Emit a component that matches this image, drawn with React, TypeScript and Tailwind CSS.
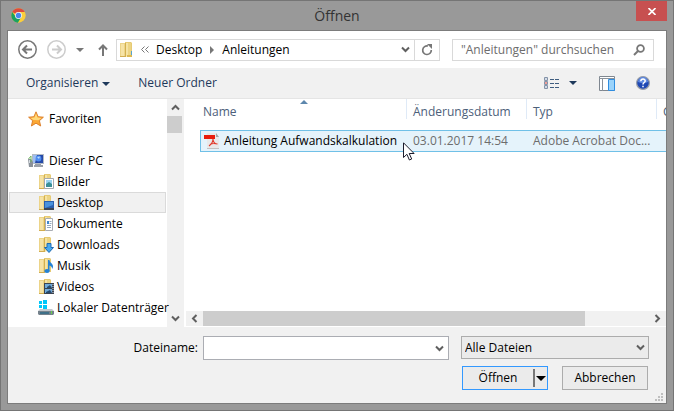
import { useState, type ReactNode } from "react";

type IconKind = "pictures" | "desktop" | "documents" | "downloads" | "music" | "videos" | "plain";

type Place = { name: string; icon: ReactNode; child?: boolean };

function FolderIcon({ kind }: { kind: IconKind }) {
  return (
    <svg width="16" height="16" viewBox="0 0 16 16" className="shrink-0" aria-hidden="true">
      <path d="M1 1h5l1 1v13H1z" fill="#ecd489" />
      <path d="M2 2h3v12H2z" fill="#f6e3a6" />
      <path d="M6 0h6l1 1v13H6z" fill="#e6ca74" />
      <path d="M6 1h1v14H6z" fill="#d3b04f" />
      <path d="M7 1h2v13l-2 1z" fill="#f5e3a4" />
      <path d="M9 1h3v12H9z" fill="#ecd484" />
      <path d="M1 14h6v1H1z" fill="#d2ad50" />
      {kind === "plain" && (
        <>
          <path d="M8 13h5v2H8z" fill="#dcb953" />
          <path d="M12 9h1v4h-1z" fill="#57a3cf" />
        </>
      )}
      {kind === "pictures" && (
        <>
          <path d="M6.500 4.500h9v10h-9z" fill="#fff" stroke="#a3a9b0" />
          <path d="M8 6h6v7H8z" fill="#9ad4f2" />
          <path d="M8 10l3-2 3 2v3H8z" fill="#3a8f98" />
        </>
      )}
      {kind === "desktop" && (
        <>
          <path d="M6 6h10v8H6z" fill="#2a5fae" />
          <path d="M7 7h8v3l-8 3z" fill="#4a92dc" />
          <path d="M6 13h10v2H6z" fill="#3c4656" />
        </>
      )}
      {kind === "documents" && (
        <>
          <path d="M7.500 2.500h7v12h-7z" fill="#fff" stroke="#a9adb3" />
          <path d="M9 5h2v3H9z" fill="#3d86cf" />
          <path d="M11.500 5.500h2M11.500 7.500h2M9 9.500h4M9 11.500h4" stroke="#93a8bf" />
        </>
      )}
      {kind === "downloads" && (
        <path d="M9 6.500h4v4h2.500L11 15.500 6.500 10.500H9z" fill="#49aaf0" stroke="#1f6bb5" />
      )}
      {kind === "music" && (
        <>
          <path d="M10 2h1.500c0 3 3.500 3 3.500 6.500 0 1-.5 2-1 2.500.2-2-1-3-2.500-3.500V13H10z" fill="#2582d5" />
          <ellipse cx="9" cy="13" rx="2.700" ry="2" fill="#2582d5" />
        </>
      )}
      {kind === "videos" && (
        <>
          <path d="M6 4h10v11H6z" fill="#3b4350" />
          <path d="M7 5h7v4H7zM7 10h7v4H7z" fill="#6ea9d8" />
          <path d="M9 8l3-2 2 3H9zM8 13l4-2 2 3H8z" fill="#26496e" />
          <path d="M15 5v10" stroke="#dfe3e8" strokeDasharray="1 1" />
        </>
      )}
    </svg>
  );
}

function StarIcon() {
  return (
    <svg width="16" height="16" viewBox="0 0 16 16" className="shrink-0" aria-hidden="true">
      <path
        d="M8 .8l2.100 4.900 5.300.5-4 3.500 1.300 5.300L8 12.200l-4.600 2.800 1.200-5.300-4-3.500 5.300-.5z"
        fill="#fba834"
        stroke="#d97a26"
        strokeWidth=".9"
      />
      <path d="M8 2.500l1.500 4 4 .4-3 2.300-5-.2L2.600 7l3.900-.5z" fill="#ffd97a" />
    </svg>
  );
}

function ComputerIcon() {
  return (
    <svg width="16" height="16" viewBox="0 0 16 16" className="shrink-0" aria-hidden="true">
      <path d="M4 1h12v10H4z" fill="#b3bbc5" />
      <path d="M5 2h10v8H5z" fill="#2549a8" />
      <path d="M5 2h4L7 10H5z" fill="#9dbdf0" />
      <circle cx="10.500" cy="5.500" r="2.900" fill="#4e8df0" />
      <path d="M9 4l3-.5-1 2.500z" fill="#b8dcff" />
      <path d="M7 11h6v1h2v2H6v-2h1z" fill="#9aa0a8" />
      <path d="M0 6h3l2 3v5H1z" fill="#8a9199" />
      <path d="M1 7h1v3H1z" fill="#d4dae0" />
      <path d="M.5 6l2.500-3v6" fill="none" stroke="#6fb65f" />
    </svg>
  );
}

function DriveIcon() {
  return (
    <svg width="16" height="16" viewBox="0 0 16 16" className="shrink-0" aria-hidden="true">
      <path d="M1 1h3v3H1zM5 0h4v4H5zM1 5h3v3H1zM5 5h4v4H5z" fill="#00c8fa" />
      <path d="M2 9h12l2 2H0z" fill="#c3c9ce" />
      <path d="M0 11h16v3l-1 1H1l-1-1z" fill="#75828c" />
      <path d="M2 12h9v2H2z" fill="#3f7088" />
      <path d="M13 11h1v3h-1z" fill="#66d14a" />
    </svg>
  );
}

function ChromeIcon() {
  return (
    <svg width="15" height="15" viewBox="0 0 48 48" aria-hidden="true">
      <circle cx="24" cy="24" r="23" fill="#fbce3c" />
      <path d="M24 24L4 12.500A23 23 0 0 1 44 13H24z" fill="#dd4b3e" />
      <path d="M4 12.500A23 23 0 0 0 22 47l11-18-9-5-9 4z" fill="#1aa260" />
      <circle cx="24" cy="24" r="11" fill="#f4f4f4" />
      <circle cx="24" cy="24" r="8.500" fill="#4a88ee" />
    </svg>
  );
}

function PdfIcon() {
  return (
    <svg width="16" height="16" viewBox="0 0 16 16" className="shrink-0" aria-hidden="true">
      <path d="M3 0h9l3 4v12H3z" fill="#e9e9e9" />
      <path d="M12 0l3 4h-3z" fill="#a5a5a5" />
      <path d="M3 15h12v1H3z" fill="#c2c2c2" />
      <path d="M0 2h11v4H0z" fill="#e81d0c" />
      <path
        d="M9 6c0 3-1.500 5-4 7M9 6.500c.4 2.500 2 4.500 4.500 4.500M6 11.500c2-1.200 4-1.500 7.500-.5"
        fill="none"
        stroke="#e0392b"
        strokeWidth="1.100"
      />
    </svg>
  );
}

function Chevron({ dir }: { dir: "up" | "down" | "left" | "right" }) {
  const paths = {
    up: "M1 6.500L4.500 3 8 6.500",
    down: "M1 2.500L4.500 6 8 2.500",
    left: "M6.500 1L3 4.500 6.500 8",
    right: "M2.500 1L6 4.500 2.500 8",
  };
  return (
    <svg width="9" height="9" viewBox="0 0 9 9" aria-hidden="true">
      <path d={paths[dir]} fill="none" stroke="#5f5f5f" strokeWidth="2" />
    </svg>
  );
}

function Triangle({ className }: { className?: string }) {
  return (
    <svg width="8" height="4" viewBox="0 0 8 4" className={className} aria-hidden="true">
      <path d="M0 0h8L4 4z" fill="currentColor" />
    </svg>
  );
}

const places: Place[] = [
  { name: "Dieser PC", icon: <ComputerIcon /> },
  { name: "Bilder", icon: <FolderIcon kind="pictures" />, child: true },
  { name: "Desktop", icon: <FolderIcon kind="desktop" />, child: true },
  { name: "Dokumente", icon: <FolderIcon kind="documents" />, child: true },
  { name: "Downloads", icon: <FolderIcon kind="downloads" />, child: true },
  { name: "Musik", icon: <FolderIcon kind="music" />, child: true },
  { name: "Videos", icon: <FolderIcon kind="videos" />, child: true },
  { name: "Lokaler Datenträger", icon: <DriveIcon />, child: true },
];

function NavBar() {
  return (
    <div className="flex h-[37px] items-center bg-white pr-3 pl-[10px]">
      <button type="button" aria-label="Zurück">
        <svg width="19" height="19" viewBox="0 0 19 19" fill="none" stroke="#777">
          <circle cx="9.500" cy="9.500" r="8.700" strokeWidth="1.500" />
          <path d="M14 9.500H6M9 5.500l-4 4 4 4" strokeWidth="2" />
        </svg>
      </button>
      <button type="button" aria-label="Vorwärts" className="ml-[10px]">
        <svg width="19" height="19" viewBox="0 0 19 19" fill="none" stroke="#ccc">
          <circle cx="9.500" cy="9.500" r="8.700" strokeWidth="1.500" />
          <path d="M5 9.500h8M10 5.500l4 4-4 4" strokeWidth="2" />
        </svg>
      </button>
      <button type="button" aria-label="Verlauf" className="ml-[10px]">
        <Triangle className="text-[#777]" />
      </button>
      <button type="button" aria-label="Nach oben" className="ml-[14px]">
        <svg width="10" height="12" viewBox="0 0 10 12" fill="none" stroke="#777" strokeWidth="2">
          <path d="M5 12V2M1 5.500l4-4 4 4" />
        </svg>
      </button>
      <div className="ml-2 flex h-[22px] min-w-0 flex-1 items-center border border-[#d9d9d9]">
        <span className="pl-[2px]">
          <FolderIcon kind="plain" />
        </span>
        <svg width="8" height="7" viewBox="0 0 8 7" className="ml-[6px]" fill="none" stroke="#777" aria-hidden="true">
          <path d="M3.500.5l-3 3 3 3M7.500.5l-3 3 3 3" />
        </svg>
        <button type="button" className="ml-[7px]">Desktop</button>
        <svg width="4" height="8" viewBox="0 0 4 8" className="ml-2" aria-hidden="true">
          <path d="M0 0l4 4-4 4z" fill="#777" />
        </svg>
        <button type="button" className="ml-2">Anleitungen</button>
        <button type="button" aria-label="Vorherige Orte" className="mr-1 ml-auto">
          <Chevron dir="down" />
        </button>
        <button
          type="button"
          aria-label="Aktualisieren"
          className="flex h-full w-[25px] items-center justify-center border-l border-[#d9d9d9]"
        >
          <svg width="12" height="12" viewBox="0 0 12 12" aria-hidden="true">
            <path d="M7 2A4.300 4.300 0 1 0 10.300 6" fill="none" stroke="#777" strokeWidth="1.700" />
            <path d="M6 0h5v5z" fill="#777" />
          </svg>
        </button>
      </div>
      <label className="ml-3 flex h-[22px] w-[202px] items-center border border-[#d9d9d9] pr-2 pl-2">
        <input
          type="search"
          aria-label="Anleitungen durchsuchen"
          placeholder={'"Anleitungen" durchsuchen'}
          className="min-w-0 flex-1 outline-none placeholder:text-[#6d6d6d]"
        />
        <svg width="12" height="12" viewBox="0 0 12 12" fill="none" stroke="#777" aria-hidden="true">
          <circle cx="7.500" cy="4.500" r="3.400" strokeWidth="1.800" />
          <path d="M5 7L1 11" strokeWidth="2" />
        </svg>
      </label>
    </div>
  );
}

function Toolbar() {
  return (
    <div className="flex h-[31px] items-center border-b border-[#e5e5e5] bg-[#f1f1f1] pr-4 pl-[18px] text-[#1e395b]">
      <button type="button" className="flex items-center gap-1">
        Organisieren
        <Triangle className="mt-px" />
      </button>
      <button type="button" className="ml-7">Neuer Ordner</button>
      <button type="button" aria-label="Ansicht" className="ml-auto">
        <svg width="15" height="13" viewBox="0 0 15 13" fill="none" aria-hidden="true">
          <path d="M.5.500h3v3h-3zM.5 4.500h3v3h-3zM.5 8.500h3v3h-3z" fill="#fff" stroke="#8493a8" />
          <path d="M2 1.500v1M2 9.500v1" stroke="#4a6e9a" />
          <path d="M2 5v2" stroke="#e03c31" />
          <path d="M6 2.500h4M11 2.500h4M6 6.500h4M11 6.500h4M6 10.500h4M11 10.500h4" stroke="#3f5d80" />
        </svg>
      </button>
      <button type="button" aria-label="Weitere Ansichten" className="ml-[10px]">
        <Triangle />
      </button>
      <button type="button" aria-label="Vorschaufenster" className="ml-[22px]">
        <svg width="16" height="15" viewBox="0 0 16 15" aria-hidden="true">
          <path d="M.5.500h15v14H.500z" fill="#fff" stroke="#7f8790" />
          <path d="M0 2.500h16M3.500 3v12" stroke="#8a929b" />
          <path d="M9.500 3.500h6v11h-6z" fill="#9ad3fb" stroke="#2f8de0" />
        </svg>
      </button>
      <button type="button" aria-label="Hilfe" className="ml-[21px]">
        <svg width="14" height="14" viewBox="0 0 14 14" aria-hidden="true">
          <circle cx="7" cy="7" r="6.400" fill="#1f49b4" stroke="#9a9fa8" strokeWidth="1.200" />
          <path d="M2 6a5 5 0 0 1 10 0c-3 1.500-7 1.500-10 0z" fill="#5f8ae0" />
          <path
            d="M4.800 5.300C4.900 2.300 9.300 2.500 9.200 5 9.100 6.500 7 6.700 7 8.500M7 9.700v1.600"
            fill="none"
            stroke="#fff"
            strokeWidth="1.500"
          />
        </svg>
      </button>
    </div>
  );
}

function Sidebar({ selected, onSelect }: { selected: string; onSelect: (name: string) => void }) {
  return (
    <div className="flex w-[176px] shrink-0 bg-white">
      <nav className="relative z-10 min-w-0 flex-1 pt-[9px] pr-px pb-2 pl-px">
        <button type="button" className="flex h-[21px] w-full items-center gap-[5px] pl-[19px] whitespace-nowrap">
          <StarIcon />
          Favoriten
        </button>
        <ul className="mt-[21px]">
          {places.map(place => (
            <li key={place.name}>
              <button
                type="button"
                onClick={() => onSelect(place.name)}
                className={`flex h-[21px] w-full items-center border whitespace-nowrap ${
                  place.child ? "gap-[3px] pl-7" : "gap-[5px] pl-[18px]"
                } ${selected === place.name ? "border-[#dadada] bg-[#f1f1f1]" : "border-transparent"}`}
              >
                {place.icon}
                {place.name}
              </button>
            </li>
          ))}
        </ul>
      </nav>
      <div className="flex w-4 shrink-0 flex-col items-center bg-[#f1f1f1]">
        <div className="flex h-[17px] items-center">
          <Chevron dir="up" />
        </div>
        <div className="h-[17px] w-full border-r border-[#f1f1f1] bg-[#cdcdcd]" />
        <div className="mt-auto flex h-[17px] items-center">
          <Chevron dir="down" />
        </div>
      </div>
      <div className="w-px shrink-0 border-r border-[#f1f1f1]" />
    </div>
  );
}

function FileList() {
  const headers = ["Name", "Änderungsdatum", "Typ", "Größe"];
  return (
    <div className="flex min-w-0 flex-1 flex-col bg-white pl-[2px]">
      <div className="relative flex-1 overflow-hidden pl-[14px]">
        <table className="w-[540px] table-fixed border-separate border-spacing-0 whitespace-nowrap">
          <colgroup>
            <col className="w-[207px]" />
            <col className="w-[120px]" />
            <col className="w-[130px]" />
            <col />
          </colgroup>
          <thead>
            <tr className="text-left text-[#4c607a]">
              {headers.map((title, i) => (
                <th key={title} className="relative h-[31px] p-0 align-top font-normal">
                  <div
                    className={`flex h-5 items-center border-r border-[#dfeaf7] pt-[6px] ${i === 0 ? "pl-[3px]" : "pl-[6px]"}`}
                  >
                    {title}
                  </div>
                  {i === 0 && (
                    <svg
                      width="8"
                      height="4"
                      viewBox="0 0 8 4"
                      className="absolute top-px left-1/2 -translate-x-1/2"
                      aria-hidden="true"
                    >
                      <path d="M4 0l4 4H0z" fill="#5d87ad" />
                    </svg>
                  )}
                </th>
              ))}
            </tr>
          </thead>
          <tbody>
            <tr className="bg-[#e5f3fb] text-[#6d6d6d]">
              <td className="h-[22px] border-y border-l border-[#70c0e7] p-0 pl-[3px] text-black">
                <div className="flex items-center gap-1">
                  <PdfIcon />
                  Anleitung Aufwandskalkulation
                </div>
              </td>
              <td className="border-y border-[#70c0e7] p-0 pl-[6px]">03.01.2017 14:54</td>
              <td className="border-y border-[#70c0e7] p-0 pl-[6px]">Adobe Acrobat Doc...</td>
              <td className="border-y border-[#70c0e7] p-0" />
            </tr>
          </tbody>
        </table>
        {/* mouse pointer */}
        <svg width="12" height="19" viewBox="0 0 12 19" className="absolute top-[43px] left-[217px]" aria-hidden="true">
          <path d="M.5.800v14.700l3.400-3.200 2.500 5.700 2.300-1-2.500-5.500h4.900z" fill="#fff" stroke="#1c1c2c" />
        </svg>
      </div>
      <div className="mb-px flex h-[15px] items-center bg-[#f1f1f1]">
        <div className="flex w-[17px] justify-center">
          <Chevron dir="left" />
        </div>
        <div className="flex h-full flex-1">
          <div className="h-full w-6/7 bg-[#cdcdcd]" />
        </div>
        <div className="flex w-[17px] justify-center">
          <Chevron dir="right" />
        </div>
      </div>
    </div>
  );
}

function Footer() {
  const [fileName, setFileName] = useState("");
  return (
    <div className="relative flex flex-col gap-[6px] bg-[#f1f1f1] pt-[9px] pr-[17px] pb-[13px]">
      <div className="flex h-6 items-start">
        <label htmlFor="file-name" className="w-[190px] self-center text-right">
          Dateiname:
        </label>
        <div className="ml-[5px] flex h-6 min-w-0 flex-1 items-center border border-[#abadb3] bg-white pr-1">
          <input
            id="file-name"
            value={fileName}
            onChange={e => setFileName(e.target.value)}
            className="h-full min-w-0 flex-1 px-1 outline-none"
          />
          <button type="button" aria-label="Zuletzt verwendet">
            <Chevron dir="down" />
          </button>
        </div>
        <div className="relative ml-3 w-[188px]">
          <select
            aria-label="Dateityp"
            className="h-[23px] w-full appearance-none border border-[#acacac] bg-[#ebebeb] pl-[3px] outline-none"
          >
            <option>Alle Dateien</option>
          </select>
          <span className="pointer-events-none absolute inset-y-0 right-1 flex items-center">
            <Chevron dir="down" />
          </span>
        </div>
      </div>
      <div className="flex h-6 justify-end gap-[14px] pr-px">
        <div className="flex w-[86px] border border-[#3399ff] bg-[#ebebeb]">
          <button type="button" className="flex-1">Öffnen</button>
          <button
            type="button"
            aria-label="Öffnen-Optionen"
            className="my-[2px] flex w-[14px] items-center justify-center border-l-2 border-[#777]"
          >
            <svg width="10" height="5" viewBox="0 0 10 5" className="shrink-0" aria-hidden="true">
              <path d="M0 0h10L5 5z" />
            </svg>
          </button>
        </div>
        <button type="button" className="w-[86px] border border-[#acacac] bg-[#ebebeb]">Abbrechen</button>
      </div>
      <svg width="8" height="8" viewBox="0 0 8 8" className="absolute right-[3px] bottom-[2px]" aria-hidden="true">
        <path d="M6 0h2v2H6zM3 3h2v2H3zM6 3h2v2H6zM0 6h2v2H0zM3 6h2v2H3zM6 6h2v2H6z" fill="#bfbfbf" />
      </svg>
    </div>
  );
}

export default function App() {
  const [selected, setSelected] = useState("Desktop");

  return (
    <div className="flex min-h-screen flex-col border border-[#757575] bg-[#999] px-[6px] pb-[6px] font-['Open_Sans','Noto_Sans',sans-serif] text-[12px] leading-4 text-black">
      <header className="relative flex h-[29px] items-center justify-center">
        <span className="absolute top-[7px] left-1">
          <ChromeIcon />
        </span>
        <h1 className="text-[14px] leading-5 text-[#333]">Öffnen</h1>
        <button
          type="button"
          aria-label="Schließen"
          className="absolute top-0 right-0 flex h-5 w-[31px] items-center justify-center bg-[#c75050]"
        >
          <svg width="8" height="7" viewBox="0 0 8 7" aria-hidden="true">
            <path d="M.5 0l7 7M7.500 0l-7 7" stroke="#fff" strokeWidth="1.600" />
          </svg>
        </button>
      </header>
      <main className="flex flex-1 flex-col border border-[#7c7c7c]">
        <NavBar />
        <Toolbar />
        <div className="flex flex-1">
          <Sidebar selected={selected} onSelect={setSelected} />
          <FileList />
        </div>
        <Footer />
      </main>
    </div>
  );
}
